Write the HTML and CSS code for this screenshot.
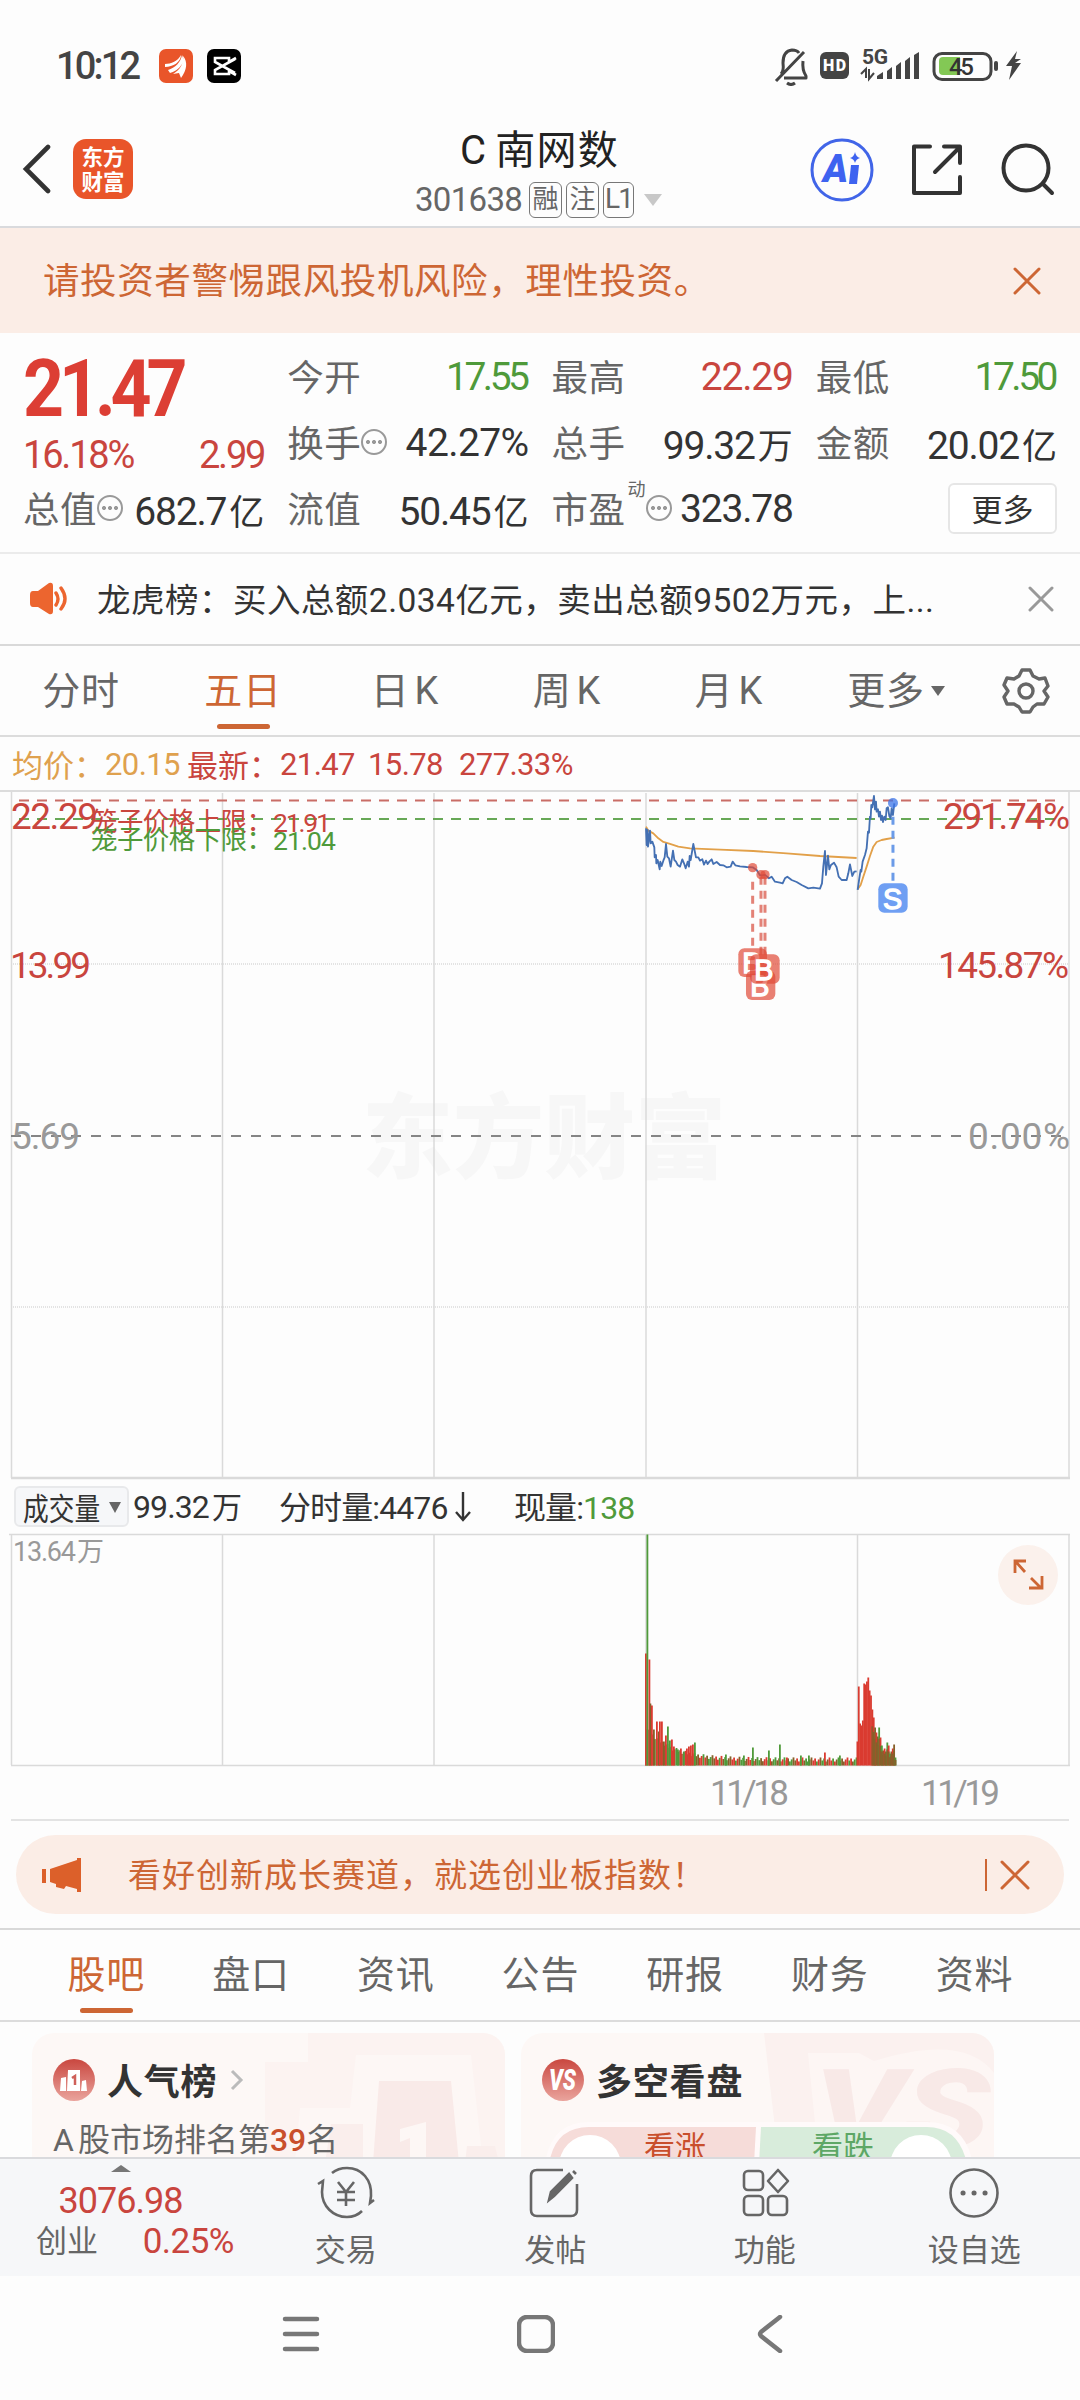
FILE: index.html
```html
<!DOCTYPE html>
<html lang="zh-CN">
  <head>
    <meta charset="UTF-8" />
    <meta name="viewport" content="width=device-width, initial-scale=1.0" />
    <title>C南网数 301638</title>
    <link rel="stylesheet" href="styles.css" />
  </head>
  <body>
    <div id="wrap">
      <!-- 状态栏 -->
      <div class="status">
        <span class="clock">10:12</span>
        <svg class="app-icon" width="34" height="34" viewBox="0 0 34 34">
          <rect width="34" height="34" rx="7" fill="#e9552a" />
          <path d="M6 15C12 15 19 12 22 6C22 13 14 18 6 18ZM9 21C16 19 22 13 23 6C27 14 19 22 11 24ZM14 25C21 21 25 14 24 7C29 13 28 21 22 29L20 24Z" fill="#fff" />
        </svg>
        <svg class="app-icon" width="34" height="34" viewBox="0 0 34 34">
          <rect width="34" height="34" rx="7" />
          <path d="M29 9L22 13V9H8V13L28 24M29 26L22 22V25H8V21L28 10" fill="none" stroke="#fff" stroke-width="2.6" />
        </svg>
        <svg class="status-right" width="250" height="40" viewBox="771 46 250 40">
          <g fill="none" stroke="#444" stroke-width="3">
            <path d="M781 74Q784 71 783 63Q783 51 792 50Q797 50 799 53M803 61Q802 70 806 76V78H784M776 81L804 52" stroke-linejoin="round" />
            <path d="M787 83Q791 86 795 83" />
          </g>
          <rect x="820" y="52" width="29" height="27" rx="6" fill="#444" />
          <text x="823" y="71" class="st-hd" textLength="23">HD</text>
          <text x="862" y="64" class="st-5g" textLength="26">5G</text>
          <path d="M861 74L866 69V78M869 69V79L874 73" fill="none" stroke="#444" stroke-width="2" />
          <path d="M877 79V76L883 72V79ZM887 79V71L892 67V79ZM896 79V66L901 62V79ZM905 79V61L910 57V79ZM914 79V55L919 52V79Z" fill="#444" />
          <rect x="934" y="53.500" width="57" height="26" rx="8" fill="none" stroke="#444" stroke-width="3" />
          <path d="M943 57H960V75H943Q939 75 939 71V61Q939 57 943 57Z" fill="#83c855" />
          <rect x="994" y="61" width="4" height="10" rx="2" fill="#444" />
          <text x="949" y="75" class="st-bat" textLength="25">45</text>
          <path d="M1017 51L1006 66H1012L1009 80L1021 63H1015L1021 59H1015Z" fill="#444" />
        </svg>
      </div>

      <!-- 标题 -->
      <div class="header">
        <svg class="back" width="30" height="50" viewBox="0 0 30 50"><path d="M26 3L4 25L26 47" fill="none" stroke="#333" stroke-width="4.600" stroke-linecap="round" /></svg>
        <div class="logo">东方<br />财富</div>
        <div class="title-box">
          <h1>C<span>南网数</span></h1>
          <p><b>301638</b><i>融</i><i>注</i><i class="l1">L1</i><span class="tri"></span></p>
        </div>
        <svg class="h-icons" width="250" height="70" viewBox="806 133 250 70">
          <circle cx="842" cy="169" r="30" fill="none" stroke="#4165e8" stroke-width="3" />
          <text x="823" y="181" class="ai">A</text>
          <path d="M851 164H859L857 183H849Z" fill="#3e63f0" />
          <path d="M855 151Q856 156 860 157Q856 158 855 162Q854 158 850 157Q854 156 855 151Z" fill="#3e63f0" />
          <g fill="none" stroke="#333" stroke-width="4" stroke-linecap="round">
            <path d="M930 145.500H914V192H960V176M944 145.500H960V162M935 171L959 147" stroke-linejoin="round" />
            <circle cx="1026" cy="167" r="22.500" />
            <path d="M1043 183L1052 192" />
          </g>
        </svg>
      </div>

      <div class="warn">
        <span>请投资者警惕跟风投机风险，理性投资。</span>
        <svg width="28" height="28" viewBox="0 0 28 28"><path d="M2 2L26 26M26 2L2 26" stroke="#cd6634" stroke-width="3" stroke-linecap="round" /></svg>
      </div>

      <!-- 行情 -->
      <div class="quote">
        <div class="col">
          <div class="price">21.47</div>
          <div class="row change red"><span>16.18%</span><span>2.99</span></div>
          <div class="row"><label>总值</label><u class="dots"></u><b>682.7<em>亿</em></b></div>
        </div>
        <div class="col">
          <div class="row"><label>今开</label><b class="green n17">17.55</b></div>
          <div class="row"><label>换手</label><u class="dots"></u><b class="pct">42.27%</b></div>
          <div class="row"><label>流值</label><b>50.45<em>亿</em></b></div>
        </div>
        <div class="col">
          <div class="row"><label>最高</label><b class="red">22.29</b></div>
          <div class="row"><label>总手</label><b>99.32<em>万</em></b></div>
          <div class="row"><label>市盈</label><sup>动</sup><u class="dots"></u><b>323.78</b></div>
        </div>
        <div class="col">
          <div class="row"><label>最低</label><b class="green n17">17.50</b></div>
          <div class="row"><label>金额</label><b>20.02<em>亿</em></b></div>
          <div class="row"><button class="more">更多</button></div>
        </div>
      </div>

      <div class="news">
        <svg width="40" height="34" viewBox="0 0 40 34">
          <path d="M4 9H9L20 1Q24 0 24 4V29Q24 33 20 32L9 25H4Q1 25 1 21V13Q1 9 4 9Z" fill="#ec652f" />
          <path d="M27 11Q31 17 27 23M32 6Q40 17 32 27" fill="none" stroke="#ec652f" stroke-width="3.400" stroke-linecap="round" />
        </svg>
        <span>龙虎榜：买入总额2.034亿元，卖出总额9502万元，上...</span>
        <svg class="close" width="26" height="26" viewBox="0 0 26 26"><path d="M2 2L24 24M24 2L2 24" stroke="#999" stroke-width="3" stroke-linecap="round" /></svg>
      </div>

      <div class="tabs ktabs">
        <span>分时</span><span class="on">五日</span><span>日<s>K</s></span><span>周<s>K</s></span><span>月<s>K</s></span><span class="drop">更多</span>
        <svg width="48" height="48" viewBox="0 0 48 48" fill="none" stroke="#666" stroke-width="3.400" stroke-linejoin="round">
          <path d="M20 3H28L31 9L37 12L43 11L46 19L42 24L46 30L42 37L35 37L31 40L28 45H20L17 40L12 37L5 37L2 30L6 24L2 18L5 11L12 12L17 9Z" />
          <circle cx="24" cy="24" r="7" />
        </svg>
      </div>

      <div class="legend">
        <span class="avg">均价：</span><span class="avg v1">20.15</span><span>最新：</span><span class="v2">21.47</span><span class="v3">15.78</span><span class="v4">277.33%</span>
      </div>

      <!-- 五日分时图 -->
      <svg class="chart" width="1080" height="688" viewBox="0 792 1080 688">
        <text x="362" y="1171" class="watermark" textLength="364" lengthAdjust="spacingAndGlyphs">东方财富</text>
        <g class="grid">
          <path d="M11.500 792V1478M222.500 793V1478M434 793V1478M646 793V1478M857.500 793V1478M1069 792V1478" />
          <path d="M11 1478H1070" stroke-width="2.500" />
          <path d="M11 964H1069M11 1307H1069" stroke-dasharray="1 1" />
        </g>
        <path d="M19 800.500H1055" class="limit" stroke="#c96d66" />
        <path d="M19 819H1055" class="limit" stroke="#67a856" />
        <path d="M11 1136H1069" stroke="#858585" stroke-width="2" stroke-dasharray="10 10" />

        <g class="axis red">
          <text x="11" y="829" textLength="87">22.29</text>
          <text x="10" y="978" textLength="81">13.99</text>
          <text x="943" y="829" textLength="127">291.74%</text>
          <text x="938" y="978" textLength="131">145.87%</text>
        </g>
        <g class="axis gray">
          <text x="11" y="1149" textLength="69">5.69</text>
          <text x="968" y="1149" textLength="102">0.00%</text>
        </g>
        <g class="cage red"><text x="91" y="831" textLength="182">笼子价格上限：</text><text x="273" y="832" textLength="58">21.91</text></g>
        <g class="cage green"><text x="91" y="849" textLength="182">笼子价格下限：</text><text x="273" y="850" textLength="63">21.04</text></g>

        <g class="lines" transform="translate(620 770) scale(0.3333)">
          <polyline class="avg-line" points="78,170 85,182 100,190 115,205 130,216 150,222 175,230 210,235 300,239 400,243 500,250 600,258 710,264" />
          <polyline class="avg-line" points="713,358 722,345 730,320 740,290 750,258 760,230 770,216 785,210 800,207 824,203" />
          <polyline points="78,175 80,225 83,180 84,230 90,182 92,220 97,215 103,232 104,262 108,255 109,280 113,270 119,298 121,275 125,288 130,272 134,262 138,222 142,260 147,265 152,290 159,242 163,270 168,275 173,285 180,290 187,268 192,280 197,295 203,275 207,290 209,258 212,270 220,222 228,262 235,262 240,272 247,268 252,284 258,272 263,282 268,275 275,268 280,282 290,276 300,285 310,286 320,292 332,290 338,275 346,286 360,289 380,291 398,292 410,300 420,316 435,315 447,325 455,320 465,335 480,338 488,340 495,325 502,320 515,330 530,336 545,345 565,355 580,353 600,356 606,340 610,290 615,243 618,315 624,257 628,298 633,285 642,278 650,292 656,320 665,330 680,330 685,310 690,283 697,318 703,305 710,304" />
          <polyline points="713,360 718,325 722,300 724,305 728,275 735,255 740,235 744,185 747,188 750,140 752,145 754,105 757,112 762,78 765,118 768,95 770,125 774,118 777,140 780,125 783,150 786,137 789,156 793,140 797,150 800,115 804,112 808,138 812,145 815,115 819,135 823,100" />
          <g class="buy">
            <path d="M398 335V535M423 320V560M435 320V560" />
            <circle cx="398" cy="293" r="14" /><circle cx="423" cy="314" r="14" /><circle cx="435" cy="314" r="14" />
            <rect x="355" y="535" width="86" height="86" rx="18" /><text x="367" y="608">B</text>
            <rect x="378" y="602" width="88" height="88" rx="18" /><text x="391" y="678">B</text>
            <rect x="390" y="553" width="89" height="88" rx="18" /><text x="403" y="629">B</text>
          </g>
          <g class="sell">
            <path d="M819 140V335" />
            <circle cx="819" cy="99" r="15" />
            <rect x="775" y="340" width="88" height="88" rx="18" /><text x="789" y="416">S</text>
          </g>
        </g>
      </svg>

      <div class="vol-head">
        <button><span>成交量</span></button>
        <span class="t1">99.32<em>万</em></span>
        <span class="t2">分时量:4476</span>
        <svg width="16" height="32" viewBox="0 0 16 32"><path d="M8 1V29M1 21L8 29L15 21" fill="none" stroke="#333" stroke-width="2.400" /></svg>
        <span class="t3">现量:<b class="green">138</b></span>
      </div>

      <!-- 成交量 -->
      <svg class="volume" width="1080" height="286" viewBox="0 1533 1080 286">
        <path class="grid" d="M9 1534.500H1070M11.500 1534V1765M222.500 1534V1765M434 1534V1765M646 1534V1765M857.500 1534V1765M1069 1534V1765M11 1765.500H1070" />
        <g id="bars"></g>
        <text x="13" y="1561" class="vmax" textLength="63">13.64</text>
        <text x="77" y="1561" class="vmax">万</text>
        <text x="710" y="1805" class="date" textLength="79">11/18</text>
        <text x="921" y="1805" class="date" textLength="79">11/19</text>
        <circle cx="1028" cy="1575" r="30" fill="#fbf1ec" />
        <path d="M1026 1561H1015V1573M1016 1562L1025 1572M1031 1578L1041 1588M1029 1588H1042V1576" fill="none" stroke="#cd6634" stroke-width="2.800" />
      </svg>

      <div class="promo-wrap">
        <div class="promo">
          <svg width="40" height="36" viewBox="0 0 40 36" fill="#dc602a"><path d="M0 12H4V26H0ZM8 12L35 3V1H39V35H35V32L24 29L22 32L14 30V27L8 25Z" /></svg>
          <span>看好创新成长赛道，就选创业板指数！</span>
          <svg class="close" width="30" height="32" viewBox="0 0 30 32"><path d="M2 3L28 29M28 3L2 29" stroke="#cd6634" stroke-width="3" stroke-linecap="round" /></svg>
        </div>
      </div>

      <div class="tabs btabs">
        <span class="on">股吧</span><span>盘口</span><span>资讯</span><span>公告</span><span>研报</span><span>财务</span><span>资料</span>
      </div>

      <div class="cards">
        <div class="card">
          <svg class="card-bg" width="240" height="130" viewBox="0 0 240 130">
            <path d="M43 0H240V130H0V29H43Z" fill="#fcf3f1" />
            <path d="M91 22H206L218 130H30L35 75H85Z" fill="#fdf7f5" />
            <path d="M114 48H186L194 130H108Z" fill="#f9eae8" />
            <path d="M66 91H98V130H60ZM202 113H230L234 130H200Z" fill="#faeeec" />
            <path d="M135 96L161 89V130H145V105L135 109Z" fill="#fdf7f5" />
          </svg>
          <div class="card-title">
            <svg width="42" height="42" viewBox="0 0 42 42">
              <circle cx="21" cy="21" r="21" fill="url(#ball)" />
              <path d="M8 19L13 18V32H7ZM15 11H27V32H14ZM29 22L33 21L34 32H28Z" fill="#fff" />
              <path d="M19 19L22 17V26" fill="none" stroke="#cf6059" stroke-width="2.500" />
              <defs><linearGradient id="ball" x2="0" y2="1"><stop stop-color="#c9473f" /><stop offset="1" stop-color="#eaa49d" /></linearGradient></defs>
            </svg>
            <h3>人气榜</h3>
            <svg class="arrow" width="14" height="22" viewBox="0 0 14 22"><path d="M2 2L11 11L2 20" fill="none" stroke="#bbb" stroke-width="3" /></svg>
          </div>
          <p><s>A</s>股市场排名第<b>39</b>名</p>
        </div>
        <div class="card">
          <svg class="card-bg" width="230" height="130" viewBox="0 0 230 130">
            <path d="M0 0H230V130H15Z" fill="#fbf1ef" />
            <path d="M44 20H95L110 28Q200 0 230 40V130H55Z" fill="#fdf6f4" />
            <text x="50" y="114" class="bg-vs" textLength="176" lengthAdjust="spacingAndGlyphs">VS</text>
          </svg>
          <div class="card-title">
            <svg width="42" height="42" viewBox="0 0 42 42">
              <circle cx="21" cy="21" r="21" fill="url(#ball)" />
              <text x="7" y="31" class="vs" textLength="27" lengthAdjust="spacingAndGlyphs">VS</text>
            </svg>
            <h3>多空看盘</h3>
          </div>
          <svg class="vote" width="430" height="42" viewBox="0 0 430 42">
            <path d="M0 42Q6 0 44 0H382Q420 0 428 42Z" fill="#fffafa" />
            <path d="M4 42Q10 5 44 5H211L209 42Z" fill="#f6dcd9" />
            <path d="M216 5H382Q414 5 422 42H214Z" fill="#d8ecdb" />
            <circle cx="45" cy="44" r="31" fill="#fff" /><circle cx="376" cy="44" r="31" fill="#fff" />
            <text x="99" y="36" fill="#c94f2c" textLength="62">看涨</text>
            <text x="267" y="36" fill="#5da765" textLength="62">看跌</text>
          </svg>
        </div>
      </div>

      <!-- 底部栏 -->
      <div class="bottom">
        <div class="index">
          <span class="up"></span>
          <div class="red big">3076.98</div>
          <div class="sub"><span>创业</span><span class="red">0.25%</span></div>
        </div>
        <div class="item">
          <svg width="60" height="54" viewBox="0 0 60 54">
            <path d="M16 7Q22 2 31 2C46 2 56 14 55 30L54 37L58 34M46 45Q40 51 31 51C17 51 6 40 6 26L7 15L2 18M22 16L30 26L38 16M30 26V40M21 26H39M21 34H39" />
          </svg>
          <span>交易</span>
        </div>
        <div class="item">
          <svg width="60" height="54" viewBox="0 0 60 54">
            <path d="M38 4H12Q6 4 6 10V44Q6 50 12 50H46Q52 50 52 44V18" />
            <path d="M24 34L26 26L44 8L47 12L29 30ZM48 5L51 8" fill="#666" />
          </svg>
          <span>发帖</span>
        </div>
        <div class="item">
          <svg width="60" height="54" viewBox="0 0 60 54">
            <rect x="9" y="5" width="19" height="19" rx="4" /><rect x="9" y="30" width="19" height="19" rx="4" /><rect x="33" y="30" width="19" height="19" rx="4" />
            <path d="M43 4L53 15L43 26L33 15Z" stroke-linejoin="round" />
          </svg>
          <span>功能</span>
        </div>
        <div class="item">
          <svg width="60" height="54" viewBox="0 0 60 54">
            <circle cx="30" cy="27" r="23.500" />
            <path d="M19 27H19.100M30 27H30.100M41 27H41.100" stroke-width="5" stroke-linecap="round" />
          </svg>
          <span>设自选</span>
        </div>
      </div>

      <div class="navbar">
        <svg width="38" height="38" viewBox="0 0 38 38"><path d="M3 4H35M3 19H35M3 34H35" /></svg>
        <svg width="38" height="38" viewBox="0 0 38 38"><rect x="2" y="2" width="34" height="34" rx="8" /></svg>
        <svg width="38" height="38" viewBox="0 0 38 38"><path d="M28 2L9 17Q7 19 9 21L28 36" /></svg>
      </div>
    </div>
    <script src="script.js"></script>
  </body>
</html>
```
FILE: styles.css
```css
* {
  margin: 0;
  padding: 0;
  box-sizing: border-box;
}
body {
  background: #fdfdfd;
  font-family: Roboto, "Noto Sans CJK SC", sans-serif;
  color: #333;
}
#wrap {
  width: 1080px;
  height: 2400px;
  overflow: hidden;
}
svg {
  display: block;
  flex: none;
}
b,
em,
i,
h1 {
  font-weight: 400;
  font-style: normal;
}
s,
u {
  text-decoration: none;
}
.red {
  color: #c9453e;
  fill: #c9453e;
}
.green {
  color: #4f9a3a;
  fill: #4f9a3a;
}
.gray {
  fill: #999;
}

/* status bar */
.status {
  display: flex;
  align-items: center;
  height: 132px;
  padding: 0 59px 0 56px;
}
.clock {
  width: 103px;
  font-size: 38px;
  font-weight: 500;
  letter-spacing: -2.800px;
  color: #444;
  white-space: nowrap;
}
.app-icon {
  margin-right: 14px;
}
.status-right {
  margin-left: auto;
}
.st-hd {
  font: 900 16px Roboto;
  fill: #fff;
}
.st-5g {
  font: 700 21px Roboto;
  fill: #444;
}
.st-bat {
  font: 500 24px Roboto;
  fill: #333;
}

/* header */
.header {
  display: flex;
  align-items: center;
  height: 96px;
  padding: 0 24px 20px 22px;
  border-bottom: 2px solid #d9dadd;
}
.logo {
  width: 60px;
  height: 60px;
  margin-left: 21px;
  padding-top: 6px;
  border-radius: 13px;
  background: #e9552a;
  color: #fff;
  font-size: 21.500px;
  font-weight: 700;
  line-height: 25px;
  text-align: center;
}
.title-box {
  width: 300px;
  margin-left: 257px;
  padding-top: 7px;
}
.title-box h1 {
  padding-left: 70px;
  font-size: 40px;
  line-height: 54px;
  letter-spacing: 1.2px;
  color: #222;
}
.title-box h1 span {
  margin-left: 8px;
}
.title-box p {
  display: flex;
  align-items: center;
  height: 44px;
  padding-left: 25px;
}
.title-box b {
  width: 114px;
  font-size: 33px;
  letter-spacing: -0.700px;
  color: #666;
}
.title-box i {
  width: 33px;
  height: 36px;
  margin-right: 4px;
  border: 1.500px solid #777;
  border-radius: 6px;
  font-size: 26px;
  line-height: 32px;
  text-align: center;
  color: #666;
}
.title-box .l1 {
  width: 31px;
  letter-spacing: -2px;
  font-size: 28px;
}
.tri {
  margin-left: 6px;
  border: 9px solid transparent;
  border-top: 12px solid #c8c8c8;
  border-bottom: 0;
}
.h-icons {
  margin-left: auto;
}
.ai {
  font: italic 900 38px Roboto;
  fill: #3e63f0;
}

.warn {
  display: flex;
  align-items: center;
  justify-content: space-between;
  height: 105px;
  padding: 0 39px 0 43px;
  background: #fbede6;
  color: #cd6634;
  font-size: 36.500px;
  letter-spacing: 0.600px;
}
.warn span {
  margin-top: -5px;
}

/* quote */
.quote {
  display: flex;
  gap: 23px;
  height: 221px;
  padding: 10px 23px 0 23px;
  border-bottom: 2px solid #ebebeb;
}
.col {
  width: 241.500px;
}
.row {
  display: flex;
  align-items: center;
  height: 66px;
  white-space: nowrap;
}
.row label {
  margin-top: -2px;
  font-size: 36.500px;
  letter-spacing: 0.500px;
  color: #666;
}
.row b {
  margin: 2px 0 0 auto;
  font-size: 39px;
  letter-spacing: -1.200px;
}
.row .pct {
  letter-spacing: -0.600px;
}
.row .n17 {
  letter-spacing: -3.500px;
  padding-right: 2px;
}
.row em {
  margin-left: 3px;
  font-size: 35px;
  letter-spacing: 0;
}
.row sup {
  align-self: flex-start;
  margin-left: 2px;
  font-size: 18px;
  color: #666;
}
.dots {
  width: 26px;
  height: 26px;
  flex: none;
  border: 2px solid #999;
  border-radius: 50%;
  background: radial-gradient(circle, #999 1.700px, transparent 2.300px) center / 6px 6px no-repeat, radial-gradient(circle, #999 1.700px, transparent 2.300px) 2px 8px / 6px 6px no-repeat, radial-gradient(circle, #999 1.700px, transparent 2.300px) 14px 8px / 6px 6px no-repeat;
}
.price {
  height: 84px;
  font-size: 79px;
  font-weight: 700;
  line-height: 92px;
  letter-spacing: -5.600px;
  color: #dc3e34;
  transform: scaleX(0.905);
  transform-origin: left;
}
.change {
  height: 48px;
  padding-top: 7px;
  justify-content: space-between;
  font-size: 38px;
  letter-spacing: -2.200px;
}
.more {
  width: 109px;
  height: 51px;
  margin-left: auto;
  border: 2px solid #e6e6e6;
  border-radius: 6px;
  background: #fff;
  font: 31px "Noto Sans CJK SC";
  line-height: 44px;
  color: #333;
}

.news {
  display: flex;
  align-items: center;
  height: 92px;
  padding: 0 26px 0 29px;
  border-bottom: 2px solid #d9d9d9;
  font-size: 33.500px;
  letter-spacing: 0.480px;
}
.news span {
  margin: -3px 0 0 28px;
}
.close {
  margin-left: auto;
}

/* tabs */
.tabs {
  display: flex;
  align-items: center;
  height: 91px;
  border-bottom: 2px solid #dcdcdc;
  font-size: 38px;
  letter-spacing: 0.800px;
  color: #666;
}
.tabs span {
  position: relative;
  height: 89px;
  line-height: 90px;
  text-align: center;
}
.tabs .on {
  color: #cd6634;
}
.tabs .on::after {
  content: "";
  position: absolute;
  bottom: 6px;
  left: 50%;
  width: 53px;
  height: 5px;
  margin-left: -26.500px;
  border-radius: 3px;
  background: #cd6634;
}
.ktabs span {
  width: 162px;
}
.ktabs s {
  margin-left: 5px;
}
.ktabs .drop {
  width: 172px;
}
.ktabs .drop::after {
  content: "";
  display: inline-block;
  margin: 0 0 8px 6px;
  border: 7px solid transparent;
  border-top: 10px solid #666;
  border-bottom: 0;
}
.ktabs svg {
  margin-left: 20px;
}
.btabs {
  height: 92px;
  padding-left: 34px;
}
.btabs span {
  width: 144.700px;
  line-height: 89px;
}
.btabs .on::after {
  bottom: 7px;
}

.legend {
  display: flex;
  align-items: center;
  height: 55px;
  padding-left: 12px;
  border-bottom: 2px solid #dcdcdc;
  font-size: 31px;
  color: #c9453e;
  white-space: nowrap;
}
.legend .avg {
  color: #dfa14e;
}
.legend .v1 {
  width: 82px;
}
.legend .v2 {
  width: 88px;
}
.legend .v3 {
  width: 91px;
}
.v1,
.v2,
.v3,
.v4 {
  padding-top: 1px;
  letter-spacing: -0.600px;
}

/* charts */
.grid {
  fill: none;
  stroke: #dadada;
  stroke-width: 1.500;
}
.limit {
  stroke-width: 1.800;
  stroke-dasharray: 10 8;
}
.watermark {
  font: 900 92px "Noto Sans CJK SC";
  fill: #f7f7f7;
}
.axis {
  font-size: 37px;
}
.cage {
  font-size: 26.500px;
}
.lines polyline {
  fill: none;
  stroke: #4470b3;
  stroke-width: 5.500;
  stroke-linejoin: round;
}
.lines .avg-line {
  stroke: #e2a049;
}
.lines text {
  font: 400 86px "Liberation Sans";
  fill: #fff;
  stroke: #fff;
  stroke-width: 4;
}
.buy path,
.sell path {
  stroke: #e38277;
  stroke-width: 9;
  stroke-dasharray: 24 18;
}
.buy rect,
.buy circle {
  fill: #e04a38;
  fill-opacity: 0.700;
}
.sell path {
  stroke: #6b9be8;
}
.sell rect {
  fill: #6f9ff3;
}
.sell circle {
  fill: #3b74e8;
  fill-opacity: 0.750;
}

.vol-head {
  display: flex;
  align-items: center;
  height: 53px;
  padding-left: 14px;
  font-size: 32px;
  letter-spacing: -0.900px;
  white-space: nowrap;
}
.vol-head > span {
  margin-top: -4px;
}
.vol-head button {
  position: relative;
  width: 115px;
  height: 41px;
  border: 2px solid #e8e9eb;
  border-radius: 6px;
  background: #f6f7f9;
  color: #333;
}
.vol-head button span {
  display: block;
  width: 92px;
  margin-left: 7px;
  font: 31px "Noto Sans CJK SC";
  line-height: 35px;
  transform: scaleX(0.830);
  transform-origin: left;
}
.vol-head button::after {
  content: "";
  position: absolute;
  top: 14px;
  right: 6px;
  border: 6.500px solid transparent;
  border-top: 11px solid #666;
  border-bottom: 0;
}
.vol-head em {
  margin-left: 3px;
  font-size: 30px;
}
.t1 {
  width: 146px;
  margin-left: 4px;
}
.t2 {
  width: 176px;
}
.t3 {
  margin-left: 43px;
}
.bar-up {
  fill: #da3b30;
}
.bar-down {
  fill: #4f9a3a;
}
.bar-mix {
  fill: #86602a;
}
.vmax {
  font-size: 27px;
  fill: #999;
}
.date {
  font-size: 35px;
  fill: #999;
}

.promo-wrap {
  height: 111px;
  padding: 16px 16px 0;
  border-bottom: 2px solid #d9d9d9;
  background: linear-gradient(#e3e3e3, #e3e3e3) 11px 0 / 1058px 2px no-repeat;
}
.promo {
  display: flex;
  align-items: center;
  height: 79px;
  padding: 0 34px 0 26px;
  border-radius: 40px;
  background: #fbede6;
  color: #cd6634;
  font-size: 33px;
  letter-spacing: 1px;
}
.promo span {
  margin: -4px 0 0 46px;
}
.promo .close {
  box-sizing: content-box;
  padding-left: 13px;
  border-left: 2px solid #cd6634;
}

/* cards */
.cards {
  display: flex;
  gap: 16px;
  height: 135px;
  padding: 11px 32px 0;
  overflow: hidden;
}
.card {
  position: relative;
  width: 473px;
  height: 150px;
  padding: 26px 21px 0;
  border-radius: 22px;
  background: #fdf8f6;
  overflow: hidden;
  flex: none;
}
.card-bg {
  position: absolute;
  top: 0;
  right: 0;
}
.card-title {
  position: relative;
  display: flex;
  align-items: center;
  height: 42px;
}
.card h3 {
  margin: -3px 0 0 12px;
  font-size: 36px;
  letter-spacing: 0.800px;
}
.arrow {
  margin-left: 13px;
}
.card p {
  position: relative;
  margin-top: 16px;
  font-size: 32px;
  line-height: 46px;
  color: #666;
}
.card p s {
  margin-right: 4px;
}
.card p b {
  color: #c94f2c;
  font-weight: 500;
}
.vs {
  font: italic 900 29px Roboto;
  fill: #fff;
}
.bg-vs {
  font: italic 900 110px Roboto;
  fill: #f8e9e7;
}
.vote {
  position: absolute;
  top: 89px;
  left: 24px;
  font-size: 31px;
}

/* bottom bar */
.bottom {
  position: relative;
  display: flex;
  height: 119px;
  background: #f6f7f9;
  border-top: 2px solid #d9dadd;
}
.index {
  width: 241px;
  padding-top: 21px;
  text-align: center;
}
.up {
  position: absolute;
  top: 6px;
  left: 111px;
  border: 10px solid transparent;
  border-bottom: 7px solid #777;
  border-top: 0;
}
.big {
  font-size: 36px;
  line-height: 42px;
  letter-spacing: -1px;
}
.sub {
  display: flex;
  justify-content: space-between;
  padding: 0 7px 0 36px;
  font-size: 31px;
  line-height: 40px;
  color: #666;
}
.sub .red {
  font-size: 35px;
  letter-spacing: -0.500px;
}
.item {
  width: 209.500px;
  padding-top: 7px;
  text-align: center;
  font-size: 31px;
  line-height: 61px;
  color: #666;
}
.item svg {
  margin: 0 auto;
  fill: none;
  stroke: #666;
  stroke-width: 2.600;
}
.navbar {
  display: flex;
  height: 125px;
  padding: 39px 0 0 282px;
  gap: 197px;
  fill: none;
  stroke: #777;
  stroke-width: 4.500;
  stroke-linecap: round;
}
```
FILE: script.js
```js
const BASE = 1765.5;
const bars = document.querySelector("#bars");

// [x, height, type]  u: up, d: down, m: overlapping
const peaks = [
  [645, 112, "u"], [646.5, 231, "d"], [648.500, 106, "u"], [649.5, 62, "m"], [651, 60, "u"], [653, 36, "m"],
  [656, 44, "u"], [658, 34, "m"], [659, 44, "u"], [661, 44, "u"], [663, 24, "m"], [665, 30, "u"], [667, 39, "d"],
  [669, 25, "d"], [671, 26, "u"], [673, 19, "u"], [677, 16, "d"], [680, 17, "u"], [683, 14, "d"], [686, 17, "u"],
  [688, 19, "u"], [690, 20, "u"], [692, 21, "u"], [694, 23, "d"], [725, 11, "d"], [743, 10, "d"], [752, 18, "d"],
  [768, 15, "d"], [779, 21, "d"], [786, 8, "u"], [800, 10, "d"], [808, 10, "d"], [824, 13, "u"], [839, 10, "d"],
];
const day2 = [24, 79, 42, 40, 45, 82, 81, 84, 88, 75, 70, 56, 48, 38, 33, 29, 38, 28, 20, 15, 17, 14, 23, 20, 12, 14, 17, 21, 8];

function addBar(x, h, type) {
  const rect = document.createElementNS("http://www.w3.org/2000/svg", "rect");
  const name = { u: "bar-up", d: "bar-down", m: "bar-mix" };
  rect.setAttribute("x", x);
  rect.setAttribute("y", BASE - h);
  rect.setAttribute("width", 1.8);
  rect.setAttribute("height", h);
  rect.setAttribute("class", name[type]);
  bars.appendChild(rect);
}

for (let i = 0; i < 118; i++) {
  const h = 4 + 32 * Math.exp(-i / 14) + ((i * 7) % 5);
  addBar(645 + i * 1.8, h, "dmuudmudm"[(i * 5) % 9]);
}
peaks.forEach((p) => addBar(p[0], p[1], p[2]));
day2.forEach((h, i) => {
  addBar(856.5 + i * 1.36, h, i < 13 ? "u" : "dmumdu"[i % 6]);
  if (i > 10) addBar(856.5 + i * 1.36, h * 0.7, "m");
});
```
